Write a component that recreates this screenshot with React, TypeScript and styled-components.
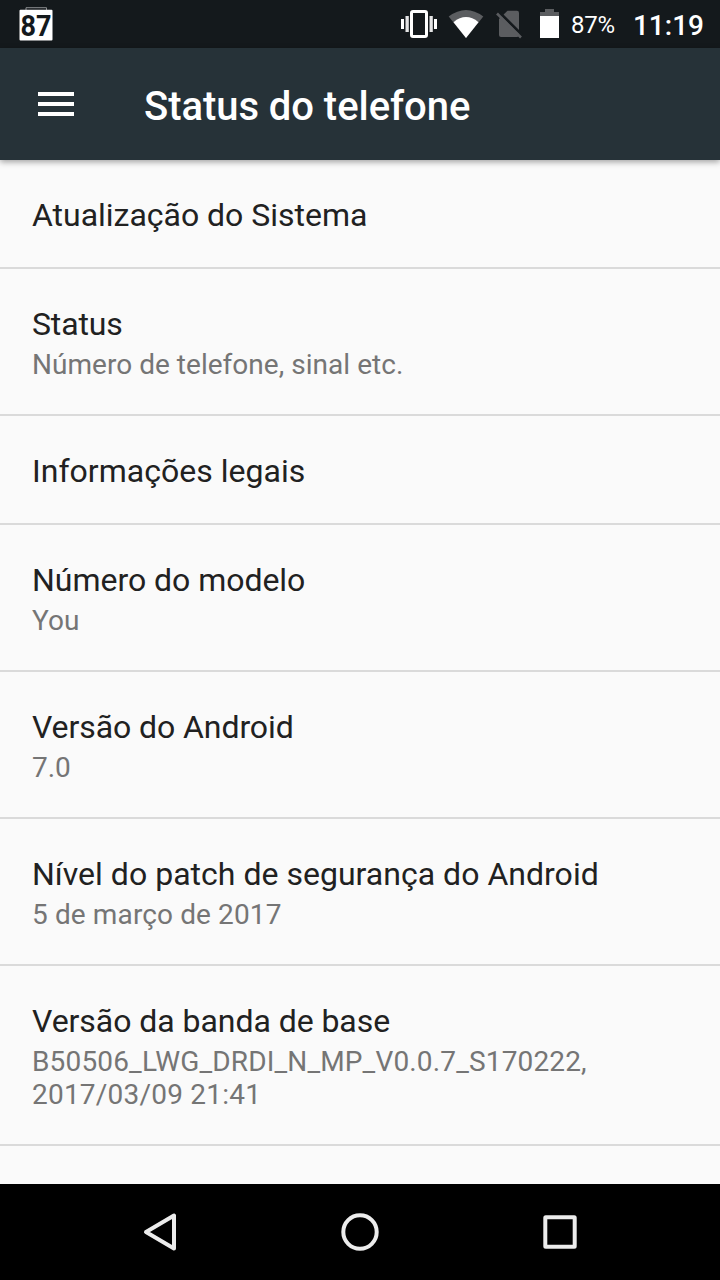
import React from 'react';
import styled, { createGlobalStyle } from 'styled-components';

const Global = createGlobalStyle`
  * { box-sizing: border-box; }
  body { margin: 0; background: #fafafa; font-family: Roboto, sans-serif; }
`;
const Screen = styled.div`
  width: 720px;
  height: 1280px;
  display: flex;
  flex-direction: column;
  overflow: hidden;
`;
const StatusBar = styled.div`
  height: 48px;
  flex: none;
  background: #14191c;
  color: #fff;
  display: flex;
  align-items: center;
  padding: 0 16px 0 19px;
  line-height: 48px;
`;
const BadgeIcon = styled.svg`
  display: block;
  flex: none;
`;
const StatusIcons = styled.svg`
  display: block;
  flex: none;
  margin-left: 342px;
`;
const Percent = styled.span`
  font-size: 24px;
  letter-spacing: -0.3px;
  margin-left: 11px;
  padding-top: 2px;
`;
const Clock = styled.span`
  font-size: 28px;
  font-weight: 500;
  margin-left: auto;
  padding-top: 3px;
`;
const AppBar = styled.header`
  height: 112px;
  flex: none;
  background: #263238;
  display: flex;
  align-items: center;
  padding-left: 38px;
  box-shadow: 0 2px 6px rgba(0, 0, 0, 0.36);
  z-index: 1;
`;
const Title = styled.h1`
  margin: 6px 0 0 70px;
  color: #fff;
  font-size: 40px;
  font-weight: 500;
  line-height: 48px;
  letter-spacing: -0.05px;
`;
const List = styled.main`
  flex: 1;
  min-height: 0;
  overflow: hidden;
  background: #fafafa;
`;
const Row = styled.div`
  padding: 36px 32px 33px;
  border-bottom: 2px solid #dadada;
`;
const Name = styled.div<{ $tracking?: number }>`
  font-size: 32px;
  line-height: 38px;
  color: #212121;
  letter-spacing: ${(p) => p.$tracking ?? 0}px;
`;
const Summary = styled.div<{ $tracking?: number }>`
  font-size: 28px;
  line-height: 33px;
  color: #757575;
  letter-spacing: ${(p) => p.$tracking ?? 0}px;
  &:nth-child(2) {
    margin-top: 5px;
  }
`;
const NavBar = styled.nav`
  height: 96px;
  flex: none;
  background: #000;
  display: flex;
  align-items: center;
  justify-content: center;
  gap: 160px;
`;
const NavIcon = styled.svg`
  width: 40px;
  height: 40px;
  fill: none;
  stroke: #ececec;
  stroke-width: 4px;
  stroke-linejoin: round;
`;

type Line = { text: string; tracking?: number };
const rows: { name: Line; summary?: Line[] }[] = [
  { name: { text: 'Atualização do Sistema', tracking: -0.02 } },
  {
    name: { text: 'Status', tracking: -0.15 },
    summary: [{ text: 'Número de telefone, sinal etc.', tracking: 0.03 }],
  },
  { name: { text: 'Informações legais', tracking: 0.02 } },
  { name: { text: 'Número do modelo', tracking: -0.03 }, summary: [{ text: 'You' }] },
  { name: { text: 'Versão do Android', tracking: -0.08 }, summary: [{ text: '7.0' }] },
  {
    name: { text: 'Nível do patch de segurança do Android', tracking: 0.02 },
    summary: [{ text: '5 de março de 2017', tracking: 0.12 }],
  },
  {
    name: { text: 'Versão da banda de base', tracking: -0.05 },
    summary: [
      { text: 'B50506_LWG_DRDI_N_MP_V0.0.7_S170222,', tracking: 0.16 },
      { text: '2017/03/09 21:41', tracking: 0.22 },
    ],
  },
];

export default function App() {
  return (
    <Screen>
      <Global />
      <StatusBar>
        <BadgeIcon width="40" height="48" viewBox="19 0 40 48">
          <path d="M26 10V7.700h20.500V10" fill="none" stroke="#8a8d8f" />
          <rect x="19.500" y="9.700" width="33" height="30.800" rx="1" fill="#fff" />
          <text x="36" y="36" textAnchor="middle" fontSize="29" fontWeight="700" fontFamily="Roboto, sans-serif" fill="#14191c" textLength="31" lengthAdjust="spacingAndGlyphs">87</text>
        </BadgeIcon>
        <StatusIcons width="159" height="48" viewBox="401 0 159 48">
          <path fill="#fff" d="M401 19h3v10h-3zM434 19h3v10h-3z" />
          <path fill="#e4e4e5" d="M405.500 16h3.300v16h-3.300zM429.500 16h3.300v16h-3.300z" />
          <rect x="411.500" y="11.500" width="15" height="25" rx="1.500" fill="none" stroke="#fff" strokeWidth="3" />
          <path d="M448.700 16.500Q466 3.500 483.300 16.500L466 38z" fill="#5b5d60" />
          <path d="M453.500 22.200Q466 12 478.500 22.200L466 38z" fill="#fff" />
          <path d="M507.500 10.700H517q2 0 2 2V35q0 2-2 2H501q-2 0-2-2V19z" fill="#5b5d60" />
          <path d="M498 11l24 24" stroke="#14191c" strokeWidth="3" />
          <path d="M497 13.500l24 24" stroke="#5b5d60" strokeWidth="2.600" />
          <path d="M545 9h9v3h5v5h-19v-5h5z" fill="#5b5d60" />
          <path d="M540 16h19v22h-19z" fill="#fff" />
        </StatusIcons>
        <Percent>87%</Percent>
        <Clock>11:19</Clock>
      </StatusBar>
      <AppBar>
        <svg width="36" height="24" viewBox="0 0 36 24" fill="#fff">
          <path d="M0 0h36v4H0zM0 10h36v4H0zM0 20h36v4H0z" />
        </svg>
        <Title>Status do telefone</Title>
      </AppBar>
      <List>
        {rows.map((r) => (
          <Row key={r.name.text}>
            <Name $tracking={r.name.tracking}>{r.name.text}</Name>
            {r.summary?.map((s) => (
              <Summary key={s.text} $tracking={s.tracking}>{s.text}</Summary>
            ))}
          </Row>
        ))}
      </List>
      <NavBar>
        <NavIcon viewBox="0 0 40 40"><path d="M34 3.500v33L6 20z" /></NavIcon>
        <NavIcon viewBox="0 0 40 40"><circle cx="20" cy="20" r="16.700" /></NavIcon>
        <NavIcon viewBox="0 0 40 40"><rect x="5.300" y="5.300" width="29.400" height="29.400" rx="0.500" /></NavIcon>
      </NavBar>
    </Screen>
  );
}
